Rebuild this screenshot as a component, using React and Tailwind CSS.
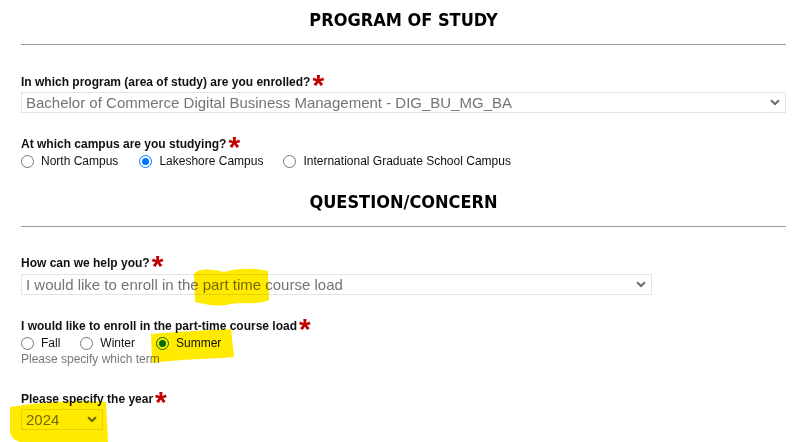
import React from "react";

const Chevron = () => (
  <svg width="10" height="7" viewBox="0 0 10 7" className="shrink-0">
    <path d="M1 1.2 L5 5 L9 1.2" fill="none" stroke="#6b6b6b" strokeWidth="2" />
  </svg>
);

const Req = () => (
  <span className="ml-[2px] text-[#c00000] text-[30px] font-bold leading-[16px] relative top-[3px]">*</span>
);

const Label = ({ children, mt }) => (
  <div className={`flex items-start h-[16px] text-[12px] leading-[16px] font-bold text-[#111] ${mt}`}>
    <span>{children}</span>
    <Req />
  </div>
);

const Select = ({ text, w, mt }) => (
  <div className={`flex items-center justify-between h-[21px] border border-[#e4e4e4] bg-white pl-[4px] pr-[5px] ${w} ${mt}`}>
    <span className="text-[15px] leading-[19px] text-[#747474] whitespace-nowrap">{text}</span>
    <Chevron />
  </div>
);

const Radio = ({ checked }) =>
  checked ? (
    <span className="w-[13px] h-[13px] rounded-full border-[1.5px] border-[#0075ff] bg-white flex items-center justify-center shrink-0">
      <span className="w-[7px] h-[7px] rounded-full bg-[#0075ff]" />
    </span>
  ) : (
    <span className="w-[13px] h-[13px] rounded-full border border-[#767676] bg-white shrink-0" />
  );

const Option = ({ label, checked, gap }) => (
  <div className={`flex items-center ${gap}`}>
    <Radio checked={checked} />
    <span className="ml-[7px] text-[12px] leading-[16px] text-[#111]">{label}</span>
  </div>
);

const Heading = ({ children, mt }) => (
  <div
    className={`h-[38px] pt-[1px] flex items-center justify-center text-[18px] font-bold text-black ${mt}`}
    style={{ fontFamily: '"DejaVu Sans Condensed", "DejaVu Sans", sans-serif', fontStretch: "condensed" }}
  >
    {children}
  </div>
);

export default function App() {
  return (
    <div
      className="relative w-[807px] h-[442px] overflow-hidden bg-white px-[21px]"
      style={{ fontFamily: '"Liberation Sans", Arial, sans-serif' }}
    >
      <Heading>PROGRAM OF STUDY</Heading>
      <div className="mt-[6px] h-px bg-[#9a9a9a]" />

      <Label mt="mt-[29px]">In which program (area of study) are you enrolled?</Label>
      <Select text="Bachelor of Commerce Digital Business Management - DIG_BU_MG_BA" w="w-[765px]" mt="mt-[2px]" />

      <Label mt="mt-[23px]">At which campus are you studying?</Label>
      <div className="mt-[1px] flex items-center h-[16px]">
        <Option label="North Campus" gap="mr-[21px]" />
        <Option label="Lakeshore Campus" checked gap="mr-[20px]" />
        <Option label="International Graduate School Campus" />
      </div>

      <Heading mt="mt-[13px]">QUESTION/CONCERN</Heading>
      <div className="mt-[6px] h-px bg-[#9a9a9a]" />

      <Label mt="mt-[28px]">How can we help you?</Label>
      <Select text="I would like to enroll in the part time course load" w="w-[631px]" mt="mt-[3px]" />

      <Label mt="mt-[23px]">I would like to enroll in the part-time course load</Label>
      <div className="mt-[1px] flex items-center h-[16px]">
        <Option label="Fall" gap="mr-[20px]" />
        <Option label="Winter" gap="mr-[21px]" />
        <Option label="Summer" checked />
      </div>
      <div className="text-[12px] leading-[16px] text-[#777]">Please specify which term</div>

      <Label mt="mt-[24px]">Please specify the year</Label>
      <Select text="2024" w="w-[82px]" mt="mt-[2px]" />

      <svg
        className="absolute inset-0 pointer-events-none mix-blend-multiply"
        width="807"
        height="442"
        viewBox="0 0 807 442"
      >
        <g fill="#ffea00">
          <path d="M194 274 C199 268 213 269 224 272 C238 268 255 268 268 271 L269 300 C256 306 240 301 226 305 C213 307 201 303 195 302 Z" />
          <path d="M151 334 C175 332 205 330 231 329 L234 357 C212 359 180 359 152 363 Z" />
          <path d="M10 407 C40 402 78 400 106 402 L108 442 L20 442 C14 440 11 437 10 432 Z" />
        </g>
      </svg>
    </div>
  );
}
